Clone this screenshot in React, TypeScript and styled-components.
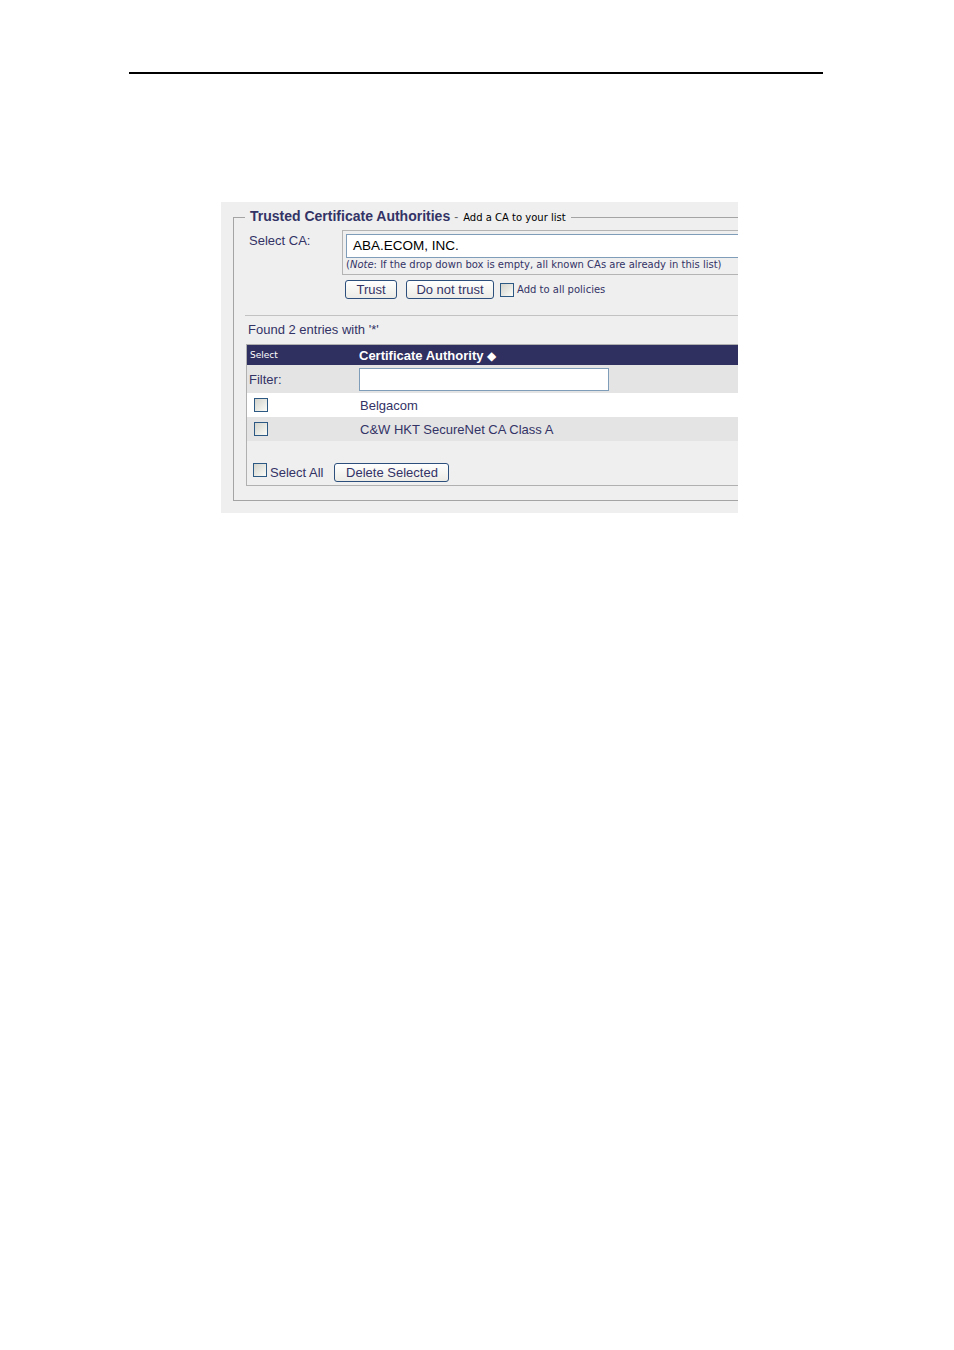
import React from 'react';
import styled, { createGlobalStyle } from 'styled-components';

const navy = '#333366';
const sans = '"Liberation Sans", Arial, sans-serif';
const small = '"DejaVu Sans", Verdana, sans-serif';

const GlobalStyle = createGlobalStyle`
  body {
    margin: 0;
    background: #ffffff;
    font-family: ${sans};
  }
`;

type Entry = { name: string };

const entries: Entry[] = [
  { name: 'Belgacom' },
  { name: 'C&W HKT SecureNet CA Class A' },
];

const App: React.FC = () => {
  return (
    <Page>
      <GlobalStyle />
      <Rule />
      <Panel>
        <Fieldset>
          <Legend>
            <LegendTitle>Trusted Certificate Authorities</LegendTitle>
            <LegendDash>-</LegendDash>
            <LegendSub>Add a CA to your list</LegendSub>
          </Legend>

          <SelectGrid>
            <Label>Select CA:</Label>
            <div>
              <SelectBox>
                <SelectInput>ABA.ECOM, INC.</SelectInput>
                <Note>
                  (<i>Note</i>: If the drop down box is empty, all known CAs are already in this list)
                </Note>
              </SelectBox>
              <ButtonRow>
                <Button $width={52}>Trust</Button>
                <Button $width={88}>Do not trust</Button>
                <CheckLabel>
                  <Check type="checkbox" />
                  <SmallText>Add to all policies</SmallText>
                </CheckLabel>
              </ButtonRow>
            </div>
          </SelectGrid>

          <Separator />
          <Found>Found 2 entries with '*'</Found>

          <Table>
            <HeadRow>
              <HeadSmall>Select</HeadSmall>
              <HeadTitle>
                Certificate Authority <Diamond>◆</Diamond>
              </HeadTitle>
            </HeadRow>
            <FilterRow>
              <CellText>Filter:</CellText>
              <FilterInput />
            </FilterRow>
            {entries.map((e, i) => (
              <DataRow key={e.name} $alt={i % 2 === 1}>
                <CheckCell>
                  <Check type="checkbox" />
                </CheckCell>
                <NameText>{e.name}</NameText>
              </DataRow>
            ))}
            <Footer>
              <SelectAll>
                <Check type="checkbox" />
                <SelectAllText>Select All</SelectAllText>
              </SelectAll>
              <Button $width={115}>Delete Selected</Button>
            </Footer>
          </Table>
        </Fieldset>
      </Panel>
    </Page>
  );
};

export default App;

const Page = styled.div`
  padding: 72px 0 0 129px;
  height: 1350px;
  box-sizing: border-box;
`;

const Rule = styled.div`
  width: 694px;
  height: 2px;
  background: #000000;
`;

const Panel = styled.div`
  margin: 128px 0 0 92px;
  width: 517px;
  height: 311px;
  box-sizing: border-box;
  padding-top: 5px;
  background: #efefef;
  overflow: hidden;
`;

const Fieldset = styled.fieldset`
  margin: 0 0 0 12px;
  width: 640px;
  box-sizing: border-box;
  padding: 3px 0 14px 11px;
  border: 1px solid #a4a4a4;
  border-right: none;
`;

const Legend = styled.legend`
  padding: 0 5px;
  line-height: 18px;
  white-space: nowrap;
`;

const LegendTitle = styled.span`
  font-family: ${sans};
  font-size: 14px;
  font-weight: bold;
  color: ${navy};
`;

const LegendDash = styled.span`
  padding: 0 5px 0 4px;
  font-family: ${sans};
  font-size: 12px;
  color: #666666;
`;

const LegendSub = styled.span`
  font-family: ${small};
  font-size: 10px;
  color: #000000;
`;

const SelectGrid = styled.div`
  display: grid;
  grid-template-columns: 97px 1fr;
  align-items: start;
`;

const Label = styled.div`
  padding: 3px 0 0 4px;
  font-size: 13px;
  line-height: 16px;
  color: ${navy};
`;

const SelectBox = styled.div`
  border: 1px solid #b4b4b4;
  border-right: none;
  padding: 3px 0 2px 3px;
`;

const SelectInput = styled.div`
  height: 24px;
  box-sizing: border-box;
  border: 1px solid #7f9db9;
  border-right: none;
  background: #ffffff;
  padding: 0 6px;
  font-size: 13.5px;
  line-height: 22px;
  color: #000000;
  white-space: nowrap;
`;

const Note = styled.div`
  font-family: ${small};
  font-size: 10px;
  line-height: 14px;
  color: ${navy};
  white-space: nowrap;
`;

const ButtonRow = styled.div`
  display: flex;
  align-items: center;
  gap: 9px;
  margin-top: 5px;
  padding-left: 3px;
`;

const Button = styled.button<{ $width: number }>`
  width: ${(p) => p.$width}px;
  height: 19px;
  padding: 0;
  border: 1px solid #2c4f7c;
  border-radius: 3px;
  background: linear-gradient(#ffffff, #ecebe6);
  font-family: ${sans};
  font-size: 13px;
  line-height: 17px;
  color: ${navy};
`;

const CheckLabel = styled.label`
  display: flex;
  align-items: center;
  gap: 3px;
  margin-left: -3px;
`;

const SelectAll = styled.label`
  display: flex;
  align-items: flex-start;
  gap: 3px;
  margin-left: -3px;
`;

const SelectAllText = styled.span`
  margin-top: 3px;
  font-size: 13px;
  line-height: 14px;
  color: ${navy};
`;

const Check = styled.input`
  appearance: none;
  margin: 0;
  width: 14px;
  height: 14px;
  box-sizing: border-box;
  border: 1px solid #2c5884;
  background: linear-gradient(135deg, #d4d4cc, #fbfbf9);
`;

const SmallText = styled.span`
  font-family: ${small};
  font-size: 10px;
  color: ${navy};
`;

const Separator = styled.div`
  margin-top: 16px;
  border-top: 1px solid #c2c2c2;
`;

const Found = styled.div`
  margin-top: 6px;
  padding-left: 3px;
  font-size: 13px;
  line-height: 16px;
  color: ${navy};
`;

const Table = styled.div`
  margin: 6px 0 0 1px;
  border: 1px solid #b0b0b0;
  border-right: none;
`;

const Row = styled.div`
  display: grid;
  grid-template-columns: 112px 1fr;
  align-items: center;
`;

const HeadRow = styled(Row)`
  height: 20px;
  background: #2f2f60;
  color: #ffffff;
`;

const HeadSmall = styled.span`
  padding-left: 3px;
  font-family: ${small};
  font-size: 9px;
`;

const HeadTitle = styled.span`
  font-size: 13px;
  font-weight: bold;
`;

const Diamond = styled.span`
  font-family: ${small};
  font-size: 12px;
`;

const FilterRow = styled(Row)`
  height: 28px;
  background: #e4e4e4;
`;

const CellText = styled.span`
  padding-left: 2px;
  font-size: 13px;
  color: ${navy};
`;

const FilterInput = styled.input`
  width: 250px;
  height: 23px;
  box-sizing: border-box;
  margin: 0;
  border: 1px solid #7f9db9;
  background: #ffffff;
`;

const DataRow = styled(Row)<{ $alt: boolean }>`
  height: 24px;
  background: ${(p) => (p.$alt ? '#e4e4e4' : '#ffffff')};
`;

const CheckCell = styled.div`
  display: flex;
  padding-left: 7px;
`;

const NameText = styled.span`
  padding-left: 1px;
  font-size: 13px;
  color: ${navy};
`;

const Footer = styled.div`
  display: flex;
  align-items: flex-start;
  gap: 11px;
  padding: 22px 0 3px 9px;
`;
